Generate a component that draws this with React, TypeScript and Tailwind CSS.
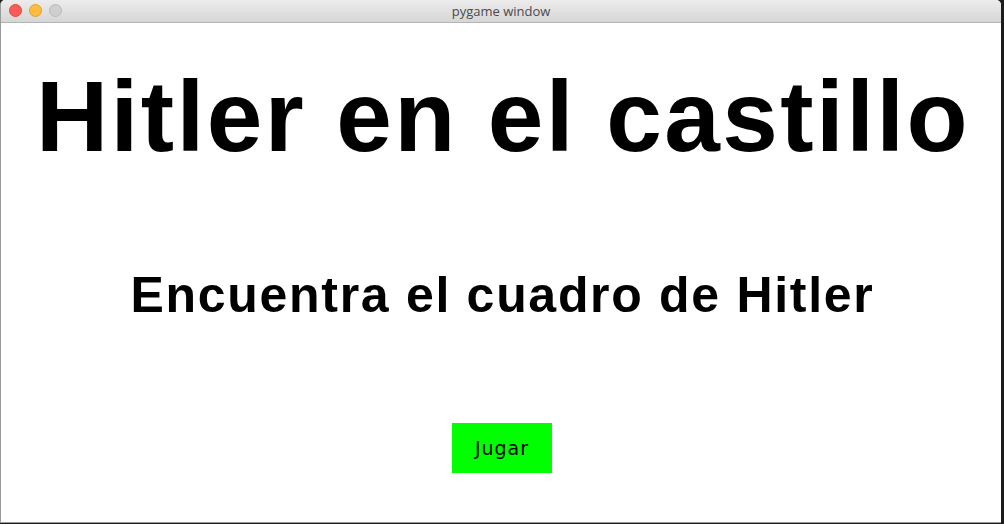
import React from "react";

export default function App() {
  return (
    <div className="w-[1004px] h-[524px] bg-[#1c1c1c] overflow-hidden" style={{ fontFamily: '"Liberation Sans", Arial, sans-serif' }}>
      <div className="w-[1001px] h-[523px] flex flex-col rounded-t-[5px] overflow-hidden border-l border-b border-[#9a9a9a] bg-white">
        <div className="h-[23px] shrink-0 relative flex items-center justify-center bg-gradient-to-b from-[#ececec] to-[#d6d6d6] border-b border-[#b4b4b4]">
          <div className="absolute left-[8px] top-[4px] flex gap-[7px]">
            <div className="w-[13px] h-[13px] rounded-full bg-[#fc5b57] border border-[#e2463f]" />
            <div className="w-[13px] h-[13px] rounded-full bg-[#fdbc40] border border-[#e0a126]" />
            <div className="w-[13px] h-[13px] rounded-full bg-[#cfcfcf] border border-[#bababa]" />
          </div>
          <span className="text-[13px] text-[#4a4a4a] leading-none" style={{ fontFamily: '"Open Sans", "Liberation Sans", sans-serif' }}>pygame window</span>
        </div>
        <div className="flex-1 flex flex-col items-center bg-white">
          <div className="mt-[43px] ml-[4px] text-[100px] leading-[100px] font-bold text-black tracking-[2.4px] whitespace-nowrap">Hitler en el castillo</div>
          <div className="mt-[104px] ml-[3px] text-[50px] leading-[50px] font-bold text-black tracking-[1.7px] whitespace-nowrap">Encuentra el cuadro de Hitler</div>
          <div className="mt-[103px] ml-[2px] w-[100px] h-[50px] bg-[#00ff00] flex items-center justify-center">
            <span className="text-[19px] font-normal text-black tracking-[1px]" style={{ fontFamily: '"DejaVu Sans", sans-serif' }}>Jugar</span>
          </div>
        </div>
      </div>
    </div>
  );
}
